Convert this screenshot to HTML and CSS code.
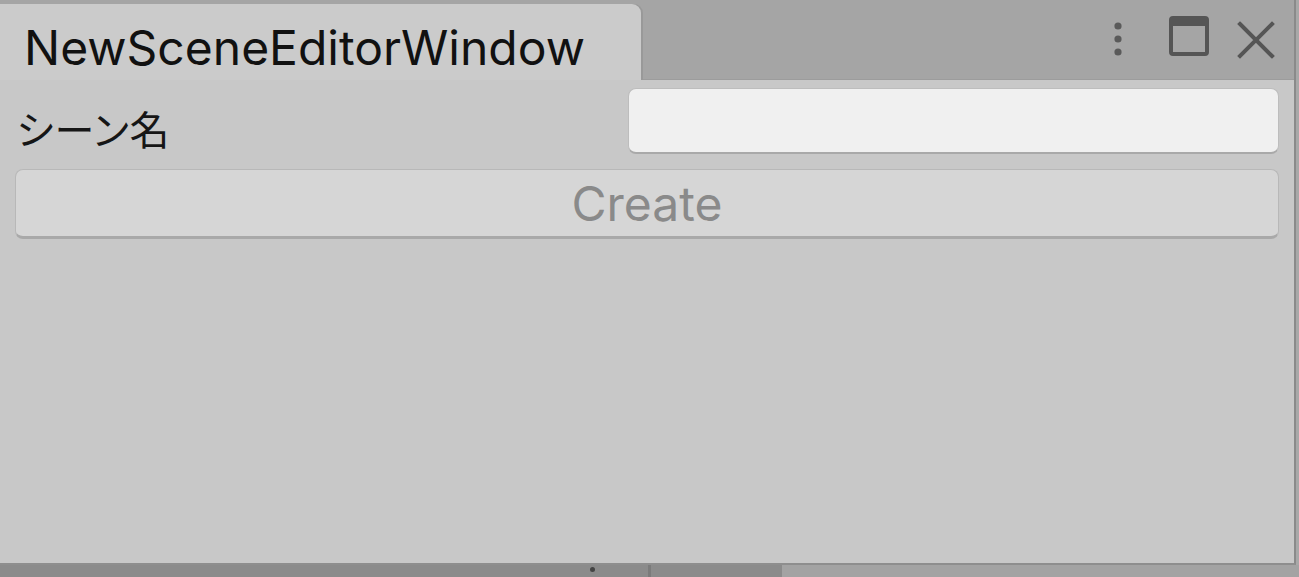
FILE: index.html
```html
<!DOCTYPE html>
<html lang="ja">
<head>
<meta charset="utf-8">
<title>NewSceneEditorWindow</title>
<link rel="stylesheet" href="styles.css">
</head>
<body>
<div class="screen">
  <div class="top">
    <div class="window">
      <div class="header">
        <div class="tab">NewSceneEditorWindow</div>
        <div class="spacer"></div>
        <div class="controls">
          <svg class="icon kebab" width="14" height="40" viewBox="0 0 14 40">
            <circle cx="7" cy="8" r="3.6" fill="#5a5a5a"/>
            <circle cx="7" cy="21" r="3.6" fill="#5a5a5a"/>
            <circle cx="7" cy="34" r="3.6" fill="#5a5a5a"/>
          </svg>
          <svg class="icon maximize" width="40" height="40" viewBox="0 0 40 40">
            <rect x="2" y="2" width="36" height="36" rx="2" fill="none" stroke="#555" stroke-width="4"/>
            <rect x="2" y="2" width="36" height="8" fill="#555"/>
          </svg>
          <svg class="icon close" width="38" height="38" viewBox="0 0 38 38">
            <path d="M3 3 L35 35 M35 3 L3 35" stroke="#555" stroke-width="4" stroke-linecap="square"/>
          </svg>
        </div>
      </div>
      <div class="content">
        <div class="field-row">
          <label class="label">シーン名</label>
          <div class="textfield"></div>
        </div>
        <div class="button">Create</div>
      </div>
    </div>
    <div class="right-edge"></div>
  </div>
  <div class="bottom">
    <div class="bottom-dark">
      <span class="dot"></span>
      <span class="vline"></span>
    </div>
    <div class="bottom-light"></div>
  </div>
</div>
</body>
</html>
```

FILE: styles.css
```css
html, body {
  margin: 0;
  padding: 0;
}
body {
  width: 1299px;
  height: 577px;
  overflow: hidden;
  background: #a3a3a3;
  font-family: "Inter", "Noto Sans CJK JP", sans-serif;
}
.screen {
  display: flex;
  flex-direction: column;
  width: 1299px;
  height: 577px;
}
.top {
  display: flex;
  height: 565px;
}
.window {
  width: 1294px;
  display: flex;
  flex-direction: column;
  border-right: 2px solid #8a8a8a;
  border-bottom: 2px solid #8e8e8e;
  background: #c8c8c8;
}
.right-edge {
  flex: 1;
  background: #a8a8a8;
}
.header {
  height: 80px;
  display: flex;
  align-items: flex-end;
  background: #a5a5a5;
  box-sizing: border-box;
  border-bottom: 1px solid #9c9c9c;
}
.tab {
  width: 641px;
  height: 76px;
  box-sizing: border-box;
  padding-left: 24px;
  padding-top: 20px;
  background: #cbcbcb;
  border-top-right-radius: 9px;
  box-shadow: 2px 0 0 #999;
  margin-bottom: -1px;
  font-size: 48px;
  color: #111;
  line-height: 1;
}
.spacer {
  flex: 1;
}
.controls {
  display: flex;
  align-items: flex-start;
  align-self: stretch;
  padding-top: 15px;
  padding-right: 19px;
}
.icon {
  display: block;
}
.kebab {
  margin-top: 3px;
  margin-right: 44px;
}
.maximize {
  margin-top: 1px;
  margin-right: 28px;
}
.close {
  margin-top: 6px;
}
.content {
  flex: 1;
  display: flex;
  flex-direction: column;
  padding: 8px 15px 0 15px;
}
.field-row {
  display: flex;
  align-items: center;
  height: 66px;
}
.label {
  width: 613px;
  padding-left: 1px;
  padding-top: 13px;
  box-sizing: border-box;
  font-family: "Noto Sans CJK JP", sans-serif;
  font-size: 40px;
  letter-spacing: -1.5px;
  color: #161616;
}
.textfield {
  flex: 1;
  height: 66px;
  box-sizing: border-box;
  background: #f0f0f0;
  border-radius: 8px;
  border: 1px solid #bdbdbd;
  border-bottom: 2px solid #a9a9a9;
}
.button {
  margin-top: 15px;
  height: 70px;
  box-sizing: border-box;
  background: #d6d6d6;
  border-radius: 8px;
  border: 1px solid #b8b8b8;
  border-bottom: 3px solid #a9a9a9;
  display: flex;
  align-items: center;
  justify-content: center;
  font-size: 48px;
  color: #8a8a8a;
  padding-bottom: 0;
}
.bottom {
  flex: 1;
  display: flex;
}
.bottom-dark {
  width: 782px;
  background: #8b8b8b;
  position: relative;
}
.bottom-light {
  flex: 1;
  background: #a3a3a3;
}
.dot {
  position: absolute;
  left: 590px;
  top: 2px;
  width: 5px;
  height: 5px;
  border-radius: 50%;
  background: #444;
}
.vline {
  position: absolute;
  left: 648px;
  top: 0;
  width: 3px;
  height: 12px;
  background: #7b7b7b;
}
```
